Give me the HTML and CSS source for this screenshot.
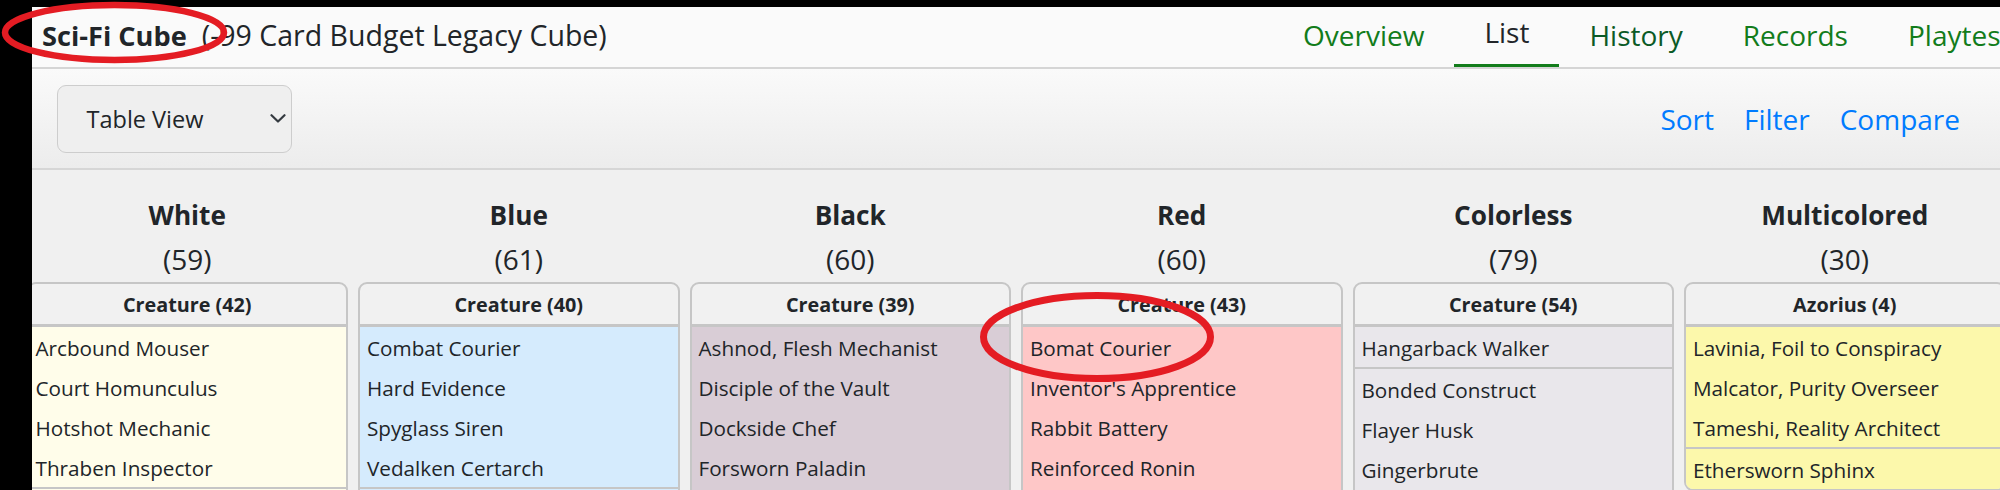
FILE: index.html
```html
<!DOCTYPE html>
<html lang="en">
<head>
<meta charset="utf-8">
<title>Sci-Fi Cube - List</title>
<link rel="stylesheet" href="styles.css">
</head>
<body>
<div class="page">
  <header class="topbar">
    <div class="title"><span class="cube-name">Sci-Fi Cube</span><span class="cube-sub">(-99 Card Budget Legacy Cube)</span></div>
    <nav class="tabs">
      <a class="tab" href="#">Overview</a>
      <a class="tab active" href="#">List</a>
      <a class="tab hover" href="#">History</a>
      <a class="tab" href="#">Records</a>
      <a class="tab" href="#">Playtest</a>
      <a class="tab" href="#">Analysis</a>
    </nav>
  </header>
  <div class="toolbar">
    <div class="select">
      <span>Table View</span>
      <svg class="chev" width="16" height="9" viewBox="0 0 16 9"><path d="M1.5 1.2 L8 7.5 L14.5 1.2" fill="none" stroke="#343a40" stroke-width="2.2" stroke-linecap="round" stroke-linejoin="round"/></svg>
    </div>
    <div class="actions">
      <a href="#">Sort</a>
      <a href="#">Filter</a>
      <a href="#">Compare</a>
    </div>
  </div>
  <main class="table">
    <section class="col white">
      <h4 class="col-title"><b>White</b><br><span class="count">(59)</span></h4>
      <div class="card">
        <div class="card-head">Creature (42)</div>
        <ul class="group">
          <li>Arcbound Mouser</li>
          <li>Court Homunculus</li>
          <li>Hotshot Mechanic</li>
          <li>Thraben Inspector</li>
        </ul>
        <ul class="group">
          <li>Adeline, Resplendent Cathar</li>
          <li>Blade Splicer</li>
        </ul>
      </div>
    </section>
    <section class="col blue">
      <h4 class="col-title"><b>Blue</b><br><span class="count">(61)</span></h4>
      <div class="card">
        <div class="card-head">Creature (40)</div>
        <ul class="group">
          <li>Combat Courier</li>
          <li>Hard Evidence</li>
          <li>Spyglass Siren</li>
          <li>Vedalken Certarch</li>
        </ul>
        <ul class="group">
          <li>Brazen Borrower</li>
          <li>Phantasmal Image</li>
        </ul>
      </div>
    </section>
    <section class="col black">
      <h4 class="col-title"><b>Black</b><br><span class="count">(60)</span></h4>
      <div class="card">
        <div class="card-head">Creature (39)</div>
        <ul class="group">
          <li>Ashnod, Flesh Mechanist</li>
          <li>Disciple of the Vault</li>
          <li>Dockside Chef</li>
          <li>Forsworn Paladin</li>
          <li>Gixian Infiltrator</li>
        </ul>
      </div>
    </section>
    <section class="col red">
      <h4 class="col-title"><b>Red</b><br><span class="count">(60)</span></h4>
      <div class="card">
        <div class="card-head">Creature (43)</div>
        <ul class="group">
          <li>Bomat Courier</li>
          <li>Inventor's Apprentice</li>
          <li>Rabbit Battery</li>
          <li>Reinforced Ronin</li>
          <li>Voltage Surger</li>
        </ul>
      </div>
    </section>
    <section class="col colorless">
      <h4 class="col-title"><b>Colorless</b><br><span class="count">(79)</span></h4>
      <div class="card">
        <div class="card-head">Creature (54)</div>
        <ul class="group">
          <li>Hangarback Walker</li>
        </ul>
        <ul class="group">
          <li>Bonded Construct</li>
          <li>Flayer Husk</li>
          <li>Gingerbrute</li>
          <li>Memnite</li>
        </ul>
      </div>
    </section>
    <section class="col multi">
      <h4 class="col-title"><b>Multicolored</b><br><span class="count">(30)</span></h4>
      <div class="card">
        <div class="card-head">Azorius (4)</div>
        <ul class="group">
          <li>Lavinia, Foil to Conspiracy</li>
          <li>Malcator, Purity Overseer</li>
          <li>Tameshi, Reality Architect</li>
        </ul>
        <ul class="group">
          <li>Ethersworn Sphinx</li>
        </ul>
      </div>
    </section>
  </main>
</div>
<svg class="marks" width="2000" height="490" viewBox="0 0 2000 490">
  <ellipse cx="114.5" cy="32.5" rx="109.5" ry="27.5" fill="none" stroke="#e41c23" stroke-width="6.5"/>
  <ellipse cx="1097" cy="337" rx="113.5" ry="41.5" fill="none" stroke="#e41c23" stroke-width="7"/>
</svg>
</body>
</html>
```

FILE: styles.css
```css
* { box-sizing: border-box; }
html, body { margin: 0; padding: 0; height: 490px; overflow: hidden; }
body {
  background: #000;
  font-family: "Open Sans", "Noto Sans", sans-serif;
  color: #212529;
  position: relative;
}
.page {
  margin: 7px 0 0 32px;
  height: 483px;
  background: #f0f0f0;
  overflow: hidden;
}

/* top bar */
.topbar {
  display: grid;
  grid-template-columns: 1241px 1fr;
  height: 62px;
  background: #fafafa;
  border-bottom: 2px solid #d5d5d5;
}
.title {
  padding: 7.5px 0 0 10px;
  font-size: 27.2px;
  line-height: 40px;
  white-space: nowrap;
}
.cube-name { font-weight: 700; }
.cube-sub { margin-left: 15px; font-size: 28.5px; }
.tabs { display: flex; white-space: nowrap; min-width: 0; }
.tab {
  flex: 0 0 auto;
  height: 60px;
  padding: 7.5px 30px 0;
  font-size: 28px;
  line-height: 40px;
  color: #127c1b;
  text-decoration: none;
}
.tab.active {
  color: #212529;
  padding-top: 5px;
  border-bottom: 3px solid #127c1b;
}
.tab.hover { color: #0b5a26; }

/* toolbar */
.toolbar {
  display: flex;
  align-items: center;
  justify-content: space-between;
  height: 101px;
  padding: 0 40px 0 25px;
  background: linear-gradient(#fafafa, #ececec);
  border-bottom: 2px solid #d6d6d6;
}
.select {
  width: 235px;
  height: 68px;
  display: flex;
  align-items: center;
  justify-content: space-between;
  padding: 0 5.5px 0 28.5px;
  border: 1.5px solid #cdcdcd;
  border-radius: 9px;
  background: #efefef;
  font-size: 23.5px;
}
.chev { display: block; }
.actions { display: flex; gap: 30px; font-size: 28px; }
.actions a { color: #007bff; text-decoration: none; }

/* table */
.table {
  display: grid;
  grid-template-columns: repeat(6, 321.5px);
  column-gap: 10px;
  margin-left: -5.5px;
  padding-top: 23px;
  align-items: start;
}
.col-title {
  margin: 0;
  text-align: center;
  font-size: 26.2px;
  line-height: 44px;
  font-weight: 400;
}
.col-title b { font-weight: 700; }
.col-title .count { font-size: 28px; }
.card {
  border: 2px solid #c6c6c6;
  border-radius: 9px;
  overflow: hidden;
  background: #f1f1f1;
}
.card-head {
  height: 43px;
  padding-top: 1px;
  line-height: 39px;
  text-align: center;
  font-weight: 700;
  font-size: 19.8px;
  border-bottom: 3px solid #c6c6c6;
}
.group { list-style: none; margin: 0; padding: 0; }
.group + .group { border-top: 2px solid #c6c6c6; }
.group li {
  height: 40px;
  padding: 1.5px 7px 0;
  line-height: 38.5px;
  font-size: 20.7px;
  white-space: nowrap;
  overflow: hidden;
}
.white .group { background: #fffdea; }
.blue .group { background: #d5ebfd; }
.black .group { background: #d9cdd6; }
.red .group { background: #fec7c7; }
.colorless .group { background: #e9e7eb; }
.multi .group { background: #fcf8ab; }

.marks {
  position: absolute;
  left: 0;
  top: 0;
  pointer-events: none;
}
```
